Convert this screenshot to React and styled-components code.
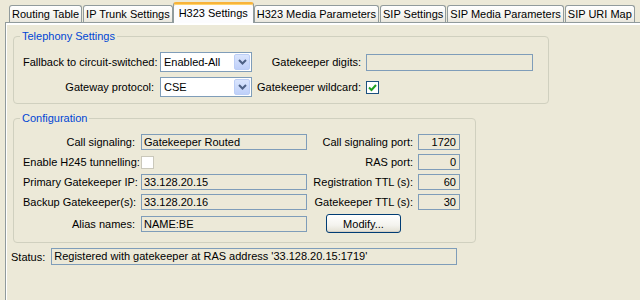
import React from "react";
import styled, { createGlobalStyle } from "styled-components";

const GlobalStyle = createGlobalStyle`
  body {
    margin: 0;
    background: #ece9d8;
    font-family: "Liberation Sans", Arial, sans-serif;
    font-size: 11px;
    color: #000;
  }
`;

const Window = styled.div`
  width: 640px;
  height: 300px;
  overflow: hidden;
  background: #ece9d8;
`;

const TabStrip = styled.div`
  display: flex;
  align-items: flex-end;
  height: 22px;
  padding-left: 9px;
`;

const Tab = styled.div`
  box-sizing: border-box;
  height: ${(p) => (p.$active ? 21 : 17)}px;
  padding: ${(p) => (p.$active ? "3px 5px 0" : "2px 2px 0")};
  margin: ${(p) => (p.$active ? "0 0 -1px -1px" : "0 1px 0 0")};
  border: 1px solid #919b9c;
  border-bottom: none;
  border-radius: 3px 3px 0 0;
  white-space: nowrap;
  line-height: 13px;
  position: relative;
  z-index: ${(p) => (p.$active ? 1 : 0)};
  background: ${(p) =>
    p.$active ? "#fcfcfe" : "linear-gradient(#ffffff, #f3f2ec 70%, #e8e6dc)"};
  border-top: ${(p) => (p.$active ? "2px solid #f8b33a" : "1px solid #919b9c")};
  box-shadow: ${(p) => (p.$active ? "inset 0 1px 0 #ffd36b" : "none")};
`;

const Panel = styled.div`
  margin-left: 5px;
  border-top: 1px solid #919b9c;
  border-left: 1px solid #919b9c;
  box-shadow: inset 1px 2px 0 #fff;
  padding: 7px 0 0 7px;
  height: 280px;
`;

const Group = styled.fieldset`
  box-sizing: border-box;
  width: ${(p) => p.$width}px;
  margin: 0 0 ${(p) => p.$gap || 0}px;
  padding: 9px 0 ${(p) => p.$bottom}px 9px;
  border: 1px solid #d0d0bf;
  border-radius: 4px;
`;

const Legend = styled.legend`
  color: #0046d5;
  line-height: 13px;
  padding: 0 2px;
  margin-left: -3px;
`;

const FormGrid = styled.div`
  display: grid;
  grid-template-columns: ${(p) => p.$cols};
  row-gap: ${(p) => p.$rowGap}px;
  align-items: center;
`;

const Label = styled.div`
  text-align: right;
  white-space: nowrap;
  padding-right: ${(p) => p.$pad}px;
`;

const Select = styled.div`
  box-sizing: border-box;
  width: 92px;
  height: 20px;
  border: 1px solid #7f9db9;
  background: #fff;
  display: flex;
  align-items: center;
  padding: 1px 1px 1px 3px;
`;

const SelectText = styled.span`
  flex: 1;
`;

const SelectButton = styled.span`
  box-sizing: border-box;
  width: 16px;
  height: 16px;
  border: 1px solid #bccef6;
  border-radius: 2px;
  background: linear-gradient(#dae5fd, #bfd0f9);
  display: flex;
  align-items: center;
  justify-content: center;
`;

const Field = styled.div`
  box-sizing: border-box;
  width: ${(p) => p.$width}px;
  height: ${(p) => p.$height || 16}px;
  border: 1px solid #7f9db9;
  background: #ece9d8;
  padding: 0 ${(p) => (p.$right ? 3 : 2)}px;
  line-height: ${(p) => (p.$height || 16) - 2}px;
  text-align: ${(p) => (p.$right ? "right" : "left")};
  white-space: nowrap;
`;

const Check = styled.div`
  box-sizing: border-box;
  width: 13px;
  height: 13px;
  border: 1px solid ${(p) => (p.$disabled ? "#cac8bb" : "#1c5180")};
  background: #fff;
  display: flex;
  align-items: center;
  justify-content: center;
`;

const Button = styled.button`
  box-sizing: border-box;
  width: 75px;
  height: 19px;
  margin-left: -92px;
  border: 1px solid #003c74;
  border-radius: 3px;
  background: linear-gradient(#ffffff, #f4f3ee 60%, #e3e0d3);
  box-shadow: inset 0 -1px 0 #d6d0c5;
  font: inherit;
  color: #000;
  padding: 0;
`;

const StatusRow = styled.div`
  display: flex;
  align-items: center;
  gap: 6px;
  margin: 5px 0 0 -2px;
`;

const Chevron = () => (
  <svg width="9" height="6" viewBox="0 0 9 6">
    <path d="M1 1l3.5 3.5L8 1" fill="none" stroke="#4d6185" strokeWidth="2" />
  </svg>
);

const Tick = () => (
  <svg width="9" height="9" viewBox="0 0 9 9">
    <path d="M1 4.5l2.5 2.5L8 2" fill="none" stroke="#21a121" strokeWidth="2" />
  </svg>
);

const Dropdown = ({ value }) => (
  <Select>
    <SelectText>{value}</SelectText>
    <SelectButton>
      <Chevron />
    </SelectButton>
  </Select>
);

const tabs = [
  "Routing Table",
  "IP Trunk Settings",
  "H323 Settings",
  "H323 Media Parameters",
  "SIP Settings",
  "SIP Media Parameters",
  "SIP URI Map",
];

export default function App() {
  return (
    <Window>
      <GlobalStyle />
      <TabStrip>
        {tabs.map((t) => (
          <Tab key={t} $active={t === "H323 Settings"}>
            {t}
          </Tab>
        ))}
      </TabStrip>
      <Panel>
        <Group $width={536} $bottom={6} $gap={8}>
          <Legend>Telephony Settings</Legend>
          <FormGrid $cols="137px 92px 114px 167px" $rowGap={5}>
            <Label $pad={6}>Fallback to circuit-switched:</Label>
            <Dropdown value="Enabled-All" />
            <Label $pad={5}>Gatekeeper digits:</Label>
            <Field $width={167} $height={17} />
            <Label $pad={6}>Gateway protocol:</Label>
            <Dropdown value="CSE" />
            <Label $pad={5}>Gatekeeper wildcard:</Label>
            <Check>
              <Tick />
            </Check>
          </FormGrid>
        </Group>
        <Group $width={463} $bottom={9}>
          <Legend>Configuration</Legend>
          <FormGrid $cols="118px 166px 111px 42px" $rowGap={4}>
            <Label $pad={6}>Call signaling:</Label>
            <Field $width={166}>Gatekeeper Routed</Field>
            <Label $pad={5}>Call signaling port:</Label>
            <Field $width={42} $right>1720</Field>

            <Label $pad={6}>Enable H245 tunnelling:</Label>
            <Check $disabled />
            <Label $pad={5}>RAS port:</Label>
            <Field $width={42} $right>0</Field>

            <Label $pad={6}>Primary Gatekeeper IP:</Label>
            <Field $width={166}>33.128.20.15</Field>
            <Label $pad={5}>Registration TTL (s):</Label>
            <Field $width={42} $right>60</Field>

            <Label $pad={6}>Backup Gatekeeper(s):</Label>
            <Field $width={166}>33.128.20.16</Field>
            <Label $pad={5}>Gatekeeper TTL (s):</Label>
            <Field $width={42} $right>30</Field>

            <Label $pad={6}>Alias names:</Label>
            <Field $width={166}>NAME:BE</Field>
            <div />
            <Button>Modify...</Button>
          </FormGrid>
        </Group>
        <StatusRow>
          <span>Status:</span>
          <Field $width={406} $height={17}>
            Registered with gatekeeper at RAS address '33.128.20.15:1719'
          </Field>
        </StatusRow>
      </Panel>
    </Window>
  );
}
